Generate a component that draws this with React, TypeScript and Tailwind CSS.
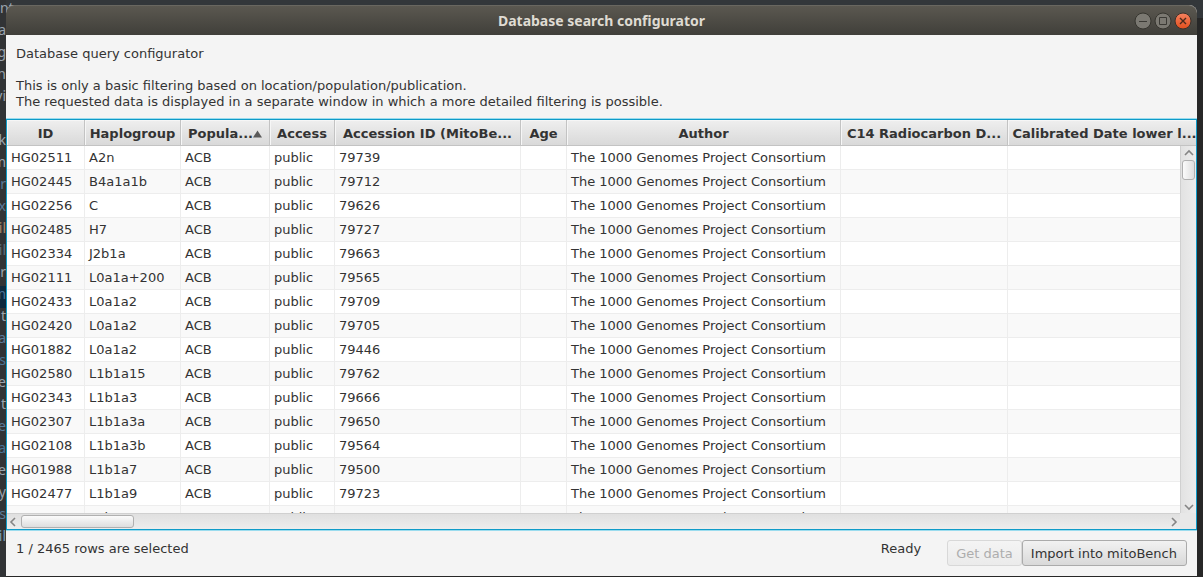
import React from "react";

type Row = [string, string, string];

const ROWS: Row[] = [
  ["HG02511", "A2n", "79739"],
  ["HG02445", "B4a1a1b", "79712"],
  ["HG02256", "C", "79626"],
  ["HG02485", "H7", "79727"],
  ["HG02334", "J2b1a", "79663"],
  ["HG02111", "L0a1a+200", "79565"],
  ["HG02433", "L0a1a2", "79709"],
  ["HG02420", "L0a1a2", "79705"],
  ["HG01882", "L0a1a2", "79446"],
  ["HG02580", "L1b1a15", "79762"],
  ["HG02343", "L1b1a3", "79666"],
  ["HG02307", "L1b1a3a", "79650"],
  ["HG02108", "L1b1a3b", "79564"],
  ["HG01988", "L1b1a7", "79500"],
  ["HG02477", "L1b1a9", "79723"],
  ["HG01956", "L2b3a", "79482"],
];

const COLUMNS = [
  { label: "ID", width: "w-[78px]" },
  { label: "Haplogroup", width: "w-[96px]" },
  { label: "Popula...", width: "w-[89px]", sorted: true },
  { label: "Access", width: "w-[65px]" },
  { label: "Accession ID (MitoBe...", width: "w-[186px]" },
  { label: "Age", width: "w-[46px]" },
  { label: "Author", width: "w-[274px]" },
  { label: "C14 Radiocarbon D...", width: "w-[167px]" },
  { label: "Calibrated Date lower l...", width: "w-auto" },
];

const EDITOR_LINES: { text: string; color: string }[] = [
  { text: "nts", color: "justify-start text-[#9aa3ad]" },
  { text: "a", color: "justify-end text-[#9aa3ad]" },
  { text: "g", color: "justify-end text-[#9aa3ad]" },
  { text: "n", color: "justify-end text-[#9aa3ad]" },
  { text: "vi", color: "justify-end text-[#9aa3ad]" },
  { text: "", color: "justify-end text-[#9aa3ad]" },
  { text: "rk", color: "justify-end text-[#9aa3ad]" },
  { text: "m", color: "justify-end text-[#9aa3ad]" },
  { text: "r", color: "justify-end text-[#5a7a99]" },
  { text: "x", color: "justify-end text-[#5a7a99]" },
  { text: "il", color: "justify-end text-[#a8896a]" },
  { text: "il", color: "justify-end text-[#5f6f7c]" },
  { text: "r", color: "justify-end text-[#9aa3ad]" },
  { text: "m", color: "justify-end text-[#4a7396] bg-[#0d293e]" },
  { text: "t", color: "justify-end text-[#9aa3ad]" },
  { text: "a", color: "justify-end text-[#5a7a99]" },
  { text: "is", color: "justify-end text-[#4a7396]" },
  { text: "ve", color: "justify-end text-[#9aa3ad]" },
  { text: "t", color: "justify-end text-[#9aa3ad]" },
  { text: "e", color: "justify-end text-[#5a7a99]" },
  { text: "a", color: "justify-end text-[#4a7396]" },
  { text: "re", color: "justify-end text-[#9aa3ad]" },
  { text: "y", color: "justify-end text-[#9aa3ad]" },
  { text: "rs", color: "justify-end text-[#5a7a99]" },
  { text: "il", color: "justify-end text-[#7ba0b8]" },
];

function Chevron({ d, label }: { d: string; label: string }) {
  return (
    <button type="button" aria-label={label} className="flex size-[14px] shrink-0 items-center justify-center">
      <svg viewBox="0 0 10 10" className="size-[10px]" fill="none" stroke="#858585" strokeWidth="1.6">
        <path d={d} />
      </svg>
    </button>
  );
}

function TitleBar() {
  return (
    <header className="relative flex h-[30px] shrink-0 items-center justify-center rounded-t-lg border-t border-[#696760] bg-linear-to-b from-[#5b5850] to-[#403f3a]">
      <h1 className="font-['Noto_Sans',sans-serif] text-[14px] font-bold text-[#dfdbd2]">
        Database search configurator
      </h1>
      <div className="absolute inset-y-0 right-[5px] flex items-center gap-[2px]">
        <button type="button" aria-label="Minimize">
          <svg viewBox="0 0 18 18" className="size-[18px]">
            <circle cx="9" cy="9" r="8" fill="#7b7972" stroke="#36352f" />
            <path d="M5 9.5h8" stroke="#3b3a35" />
          </svg>
        </button>
        <button type="button" aria-label="Maximize">
          <svg viewBox="0 0 18 18" className="size-[18px]">
            <circle cx="9" cy="9" r="8" fill="#7b7972" stroke="#36352f" />
            <path d="M5.5 5.5h7v7h-7z" fill="none" stroke="#3b3a35" />
          </svg>
        </button>
        <button type="button" aria-label="Close">
          <svg viewBox="0 0 18 18" className="size-[18px]">
            <defs>
              <linearGradient id="close" x2="0" y2="1">
                <stop stopColor="#f58260" />
                <stop offset="1" stopColor="#e24f1d" />
              </linearGradient>
            </defs>
            <circle cx="9" cy="9" r="8" fill="url(#close)" stroke="#3a312b" />
            <path d="M6 6l6 6M12 6l-6 6" stroke="#4b2a1c" strokeWidth="1.4" />
          </svg>
        </button>
      </div>
    </header>
  );
}

function ResultTable() {
  return (
    <section className="flex min-h-0 flex-1 flex-col border-y border-[#9bdcee]">
      <div className="flex min-h-0 flex-1 flex-col border border-[#0f9bc8]">
        <div className="relative min-h-0 flex-1 overflow-hidden bg-white">
          <table className="w-full table-fixed border-separate border-spacing-0 whitespace-nowrap">
            <thead>
              <tr>
                {COLUMNS.map((c) => (
                  <th
                    key={c.label}
                    scope="col"
                    aria-sort={c.sorted ? "ascending" : undefined}
                    className={`h-[26px] overflow-hidden border-r border-b border-[#c3c3c3] bg-linear-to-b from-[#efefef] to-[#d9d9d9] p-0 font-bold shadow-[inset_1px_1px_0_#f6f6f6] last:border-r-0 last:pl-[5px] ${c.width}`}
                  >
                    <span className="flex items-center justify-center pt-[2px]">
                      {c.label}
                      {c.sorted && (
                        <svg viewBox="0 0 9 8" className="h-[8px] w-[9px]" fill="#5a5a5a">
                          <path d="M4.5 0.5L9 7.5H0z" />
                        </svg>
                      )}
                    </span>
                  </th>
                ))}
              </tr>
            </thead>
            <tbody>
              {ROWS.map(([id, group, accession]) => (
                <tr key={id} className="even:bg-[#f9f9f9]">
                  {[id, group, "ACB", "public", accession, "", "The 1000 Genomes Project Consortium", "", ""].map(
                    (value, i) => (
                      <td
                        key={i}
                        className="h-[24px] border-r border-b border-[#ededed] px-1 py-0 last:border-r-0"
                      >
                        {value}
                      </td>
                    ),
                  )}
                </tr>
              ))}
            </tbody>
          </table>
          <div className="absolute top-[26px] right-0 bottom-0 flex w-[16px] flex-col items-center border-l border-[#d0d0d0] bg-linear-to-r from-[#e2e2e2] to-[#ededed]">
            <Chevron label="Scroll up" d="M1 7l4-4 4 4" />
            <div className="h-[20px] w-[13px] rounded-[3px] border border-[#b0b0b0] bg-linear-to-r from-[#fbfbfb] to-[#dedede]" />
            <div className="flex-1" />
            <Chevron label="Scroll down" d="M1 4l4 4 4-4" />
          </div>
        </div>
        <div className="flex h-[16px] shrink-0 bg-[#e8e8e8]">
          <div className="flex flex-1 items-center border-t border-[#d0d0d0] bg-linear-to-b from-[#e0e0e0] to-[#ededed]">
            <Chevron label="Scroll left" d="M6 1l-4 4 4 4" />
            <div className="h-[13px] w-[113px] rounded-[3px] border border-[#b0b0b0] bg-linear-to-b from-[#fbfbfb] to-[#dedede]" />
            <div className="flex-1" />
            <Chevron label="Scroll right" d="M4 1l4 4-4 4" />
          </div>
          <div className="w-[16px]" />
        </div>
      </div>
    </section>
  );
}

export default function App() {
  return (
    <div className="relative flex h-screen overflow-hidden bg-[#272727] font-['DejaVu_Sans',sans-serif] text-[13px] leading-[16px] text-[#333333]">
      <div aria-hidden="true" className="absolute inset-x-0 top-0 h-[18px] bg-[#33373a]" />
      <div aria-hidden="true" className="relative w-[6px] shrink-0 bg-[#313335]">
        {EDITOR_LINES.map((line, i) => (
          <div
            key={i}
            className={`flex h-[22px] font-['Noto_Sans',sans-serif] text-[14px] leading-[16px] whitespace-nowrap ${line.color}`}
          >
            {line.text}
          </div>
        ))}
      </div>
      <main className="relative mt-[5px] mr-[6px] mb-px flex min-w-0 flex-1 flex-col rounded-t-lg bg-[#f4f4f4]">
        <TitleBar />
        <div className="px-[10px] pt-[11px] pb-[8px]">
          <h2>Database query configurator</h2>
          <p className="pt-4">
            This is only a basic filtering based on location/population/publication.
            <br />
            The requested data is displayed in a separate window in which a more detailed filtering is possible.
          </p>
        </div>
        <ResultTable />
        <footer className="flex h-[45px] shrink-0 items-start px-[10px] pt-[9px]">
          <p className="pt-px">1 / 2465 rows are selected</p>
          <div className="ml-auto flex items-start">
            <p className="mr-[26px] pt-px">Ready</p>
            <button
              type="button"
              disabled
              className="h-[26px] rounded-[3px] border border-[#d8d8d8] bg-linear-to-b from-[#f4f4f4] to-[#ebebeb] px-2 pt-[2px] text-[#adadad]"
            >
              Get data
            </button>
            <button
              type="button"
              className="h-[26px] rounded-[3px] border border-[#ababab] bg-linear-to-b from-[#f2f2f2] to-[#d9d9d9] pt-[2px] pr-[9px] pl-2"
            >
              Import into mitoBench
            </button>
          </div>
        </footer>
      </main>
    </div>
  );
}
